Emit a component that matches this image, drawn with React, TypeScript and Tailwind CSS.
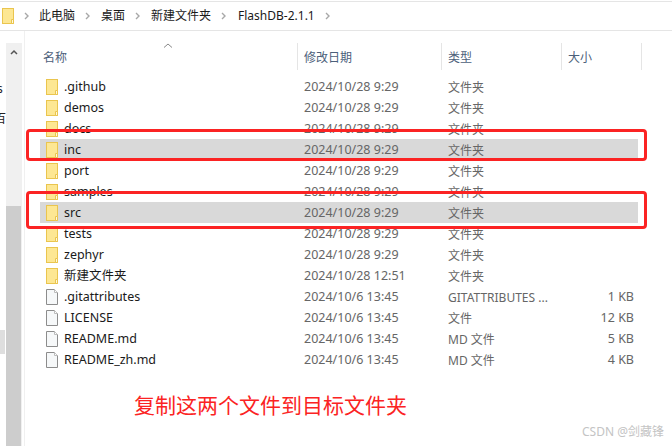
const F = '"Noto Sans", "Noto Sans CJK SC", sans-serif';
const rows = [
  ['.github','2024/10/28 9:29','文件夹','',0,0],['demos','2024/10/28 9:29','文件夹','',0,0],['docs','2024/10/28 9:29','文件夹','',0,0],
  ['inc','2024/10/28 9:29','文件夹','',0,1],['port','2024/10/28 9:29','文件夹','',0,0],['samples','2024/10/28 9:29','文件夹','',0,0],
  ['src','2024/10/28 9:29','文件夹','',0,1],['tests','2024/10/28 9:29','文件夹','',0,0],['zephyr','2024/10/28 9:29','文件夹','',0,0],
  ['新建文件夹','2024/10/28 12:51','文件夹','',0,0],['.gitattributes','2024/10/6 13:45','GITATTRIBUTES ...','1 KB',1,0],
  ['LICENSE','2024/10/6 13:45','文件','12 KB',1,0],['README.md','2024/10/6 13:45','MD 文件','5 KB',1,0],['README_zh.md','2024/10/6 13:45','MD 文件','4 KB',1,0],
] as const;
function Folder(){return <svg width="12" height="16" viewBox="0 0 12 16" className="shrink-0"><rect x=".5" y=".5" width="11" height="15" fill="#fde793" stroke="#eac54e"/><path d="M9.5 15.5V11.5H11.5V15.5Z" fill="#fff8dc" stroke="#eac54e"/></svg>}
function Doc(){return <svg width="12" height="16" viewBox="0 0 12 16" className="shrink-0"><path d="M.5.5H8.5L11.5 3.5V15.5H.5Z" fill="#f6f8f9" stroke="#8c8c8c"/><path d="M8.5 .5V3.5H11.5" fill="#fff" stroke="#bcbcbc"/></svg>}
function Chev(){return <svg width="5" height="8" viewBox="0 0 5 8" className="shrink-0 mx-[10px]"><path d="M1 1L4 4L1 7" fill="none" stroke="#a8a8a8" strokeWidth="1.4"/></svg>}
export default function App(){return(
<div className="relative w-[672px] h-[446px] overflow-hidden bg-white text-[12.5px] flex flex-col" style={{fontFamily:F}}>
  <div className="mt-[1px] h-[30px] border-y border-[#e5e5e5] flex items-center text-[#1a1a1a] text-[12px] shrink-0 pl-[2px]">
    <Folder/>
    <Chev/><span>此电脑</span>
    <Chev/><span className="ml-px">桌面</span>
    <Chev/><span className="ml-px">新建文件夹</span>
    <Chev/><span className="ml-[2px]">FlashDB-2.1.1</span>
    <Chev/>
  </div>
  <div className="flex flex-1 min-h-0">
    <div className="w-[6px] text-[12px] overflow-hidden pt-[43px] leading-[30px] text-[#222] shrink-0 whitespace-nowrap"><div className="-ml-[3px]">s</div><div className="-ml-[6px]">百</div></div>
    <div className="w-[16px] bg-[#f0f0f0] mt-[12px] flex flex-col shrink-0 relative">
      <div className="h-[17px] flex items-center justify-center"><svg width="8" height="6" viewBox="0 0 8 6"><path d="M1 5L4 2L7 5" fill="none" stroke="#555" strokeWidth="1.5"/></svg></div>
      <div className="flex-1"/>
      <div className="h-[240px] bg-[#cdcdcd] mr-px"/>
      <div className="absolute top-[287px] left-[-6px] w-[5px] h-[24px] bg-[#dedede]"/>
    </div>
    <div className="w-px bg-[#f0f0f0] shrink-0 ml-[2px]"/>
    <div className="flex-1 relative min-w-0">
      <div className="h-[27px] mt-[12px] flex text-[#4c607a] text-[12px] relative">
        <svg className="absolute left-[138px] top-0" width="10" height="5" viewBox="0 0 10 5"><path d="M1 4.5L5 1L9 4.5" fill="none" stroke="#888"/></svg>
        <div className="w-[273px] pl-[18px] leading-[30px] border-r border-[#e5e5e5]">名称</div>
        <div className="w-[144px] pl-[6px] leading-[30px] border-r border-[#e5e5e5]">修改日期</div>
        <div className="w-[120px] pl-[6px] leading-[30px] border-r border-[#e5e5e5]">类型</div>
        <div className="w-[80px] pl-[6px] leading-[30px] border-r border-[#e5e5e5]">大小</div>
      </div>
      <div className="mt-[6px]">
      {rows.map(r=>(
        <div key={r[0]} className={"h-[21px] flex items-center whitespace-nowrap w-[598px] ml-[15px] pl-[6px] "+(r[5]?"bg-[#d9d9d9]":"")}>
          {r[4]?<Doc/>:<Folder/>}
          <span className="ml-[6px] pt-[2px] w-[240px] text-[#1a1a1a]">{r[0]}</span>
          <span className="pt-[2px] w-[144px] text-[#666]">{r[1]}</span>
          <span className="pt-[2px] w-[120px] text-[#666] text-[12px]">{r[2]}</span>
          <span className="pt-[2px] w-[66px] text-right text-[#666]">{r[3]}</span>
        </div>))}
      </div>
    </div>
  </div>
  <div className="absolute left-[26px] top-[129px] w-[621px] h-[32px] border-[3px] border-[#fb2323] rounded-[4px]"/>
  <div className="absolute left-[26px] top-[191px] w-[621px] h-[38px] border-[3px] border-[#fb2323] rounded-[4px]"/>
  <div className="absolute left-[134px] top-[391px] text-[21px] leading-[28px] text-[#fb2323]">复制这两个文件到目标文件夹</div>
  <div className="absolute right-[8px] top-[424px] text-[12px] leading-[16px] text-[#c4c4c4]">CSDN @剑藏锋</div>
</div>)}
